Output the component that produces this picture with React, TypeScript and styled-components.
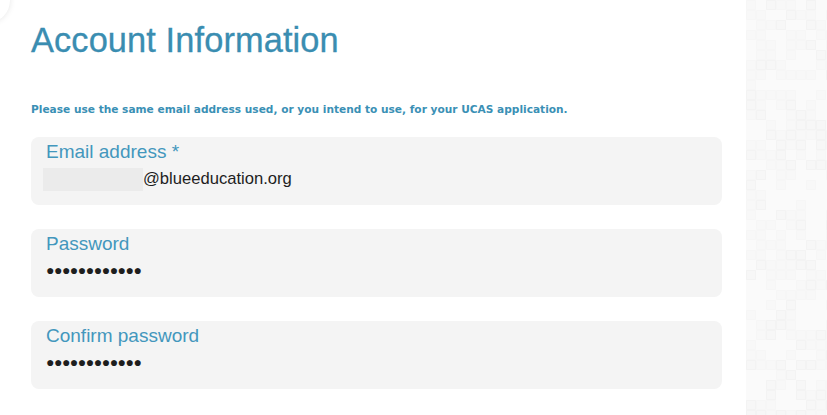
import styled, { createGlobalStyle } from "styled-components";

const GlobalStyle = createGlobalStyle`
  html, body {
    margin: 0;
    padding: 0;
    background: #ffffff;
  }
  body {
    font-family: "Liberation Sans", Arial, sans-serif;
  }
`;

const Page = styled.div`
  display: flex;
  width: 827px;
  height: 415px;
  overflow: hidden;
  position: relative;
  background: #fff;
`;

const Main = styled.main`
  flex: 0 0 746px;
  padding: 21px 24px 0 31px;
  box-sizing: border-box;
`;

const Corner = styled.div`
  position: absolute;
  left: -30px;
  top: -22px;
  width: 40px;
  height: 44px;
  border-radius: 50%;
  background: #fff;
  box-shadow: 0 0 6px rgba(0, 0, 0, 0.1);
`;

const Title = styled.h1`
  margin: 0;
  font-family: "Liberation Sans", Arial, sans-serif;
  font-weight: 400;
  font-size: 34.4px;
  line-height: 38px;
  color: #3a8db1;
  letter-spacing: 0.1px;
  -webkit-text-stroke: 0.3px #3a8db1;
`;

const Notice = styled.p`
  margin: 43px 0 0;
  font-family: "DejaVu Sans", Verdana, sans-serif;
  font-weight: 700;
  font-size: 10.6px;
  line-height: 14px;
  color: #3a90b5;
`;

const Fields = styled.div`
  display: flex;
  flex-direction: column;
  gap: 24px;
  margin-top: 21px;
`;

const Field = styled.div`
  height: 68px;
  box-sizing: border-box;
  padding: 3px 15px 0;
  background: #f4f4f4;
  border-radius: 8px;
`;

const Label = styled.div`
  font-size: 19px;
  line-height: 23px;
  color: #4397bd;
`;

const Value = styled.div<{ $dots?: boolean }>`
  display: flex;
  align-items: center;
  margin-top: ${({ $dots }) => ($dots ? "3px" : "4px")};
  font-size: ${({ $dots }) => ($dots ? "14px" : "16.6px")};
  line-height: 24px;
  color: #1e1e1e;
  letter-spacing: ${({ $dots }) => ($dots ? "-0.5px" : "0")};
`;

const Redacted = styled.span`
  display: inline-block;
  width: 100px;
  height: 23px;
  margin-left: -3px;
  background: #ebebeb;
`;

const Aside = styled.aside`
  flex: 1;
  background: #fafafa;
`;

const squares = (() => {
  const out: { x: number; y: number; o: number }[] = [];
  let seed = 7;
  const rnd = () => {
    seed = (seed * 9301 + 49297) % 233280;
    return seed / 233280;
  };
  for (let y = 0; y < 415; y += 10) {
    for (let x = 0; x < 81; x += 10) {
      const r = rnd();
      if (r < 0.5) out.push({ x, y, o: r < 0.15 ? 0.022 : 0.012 });
    }
  }
  return out;
})();

const Pattern = () => (
  <svg width="81" height="415" viewBox="0 0 81 415" style={{ display: "block" }}>
    {squares.map((s, i) => (
      <rect
        key={i}
        x={s.x + 0.5}
        y={s.y + 0.5}
        width="9"
        height="9"
        fill="#000"
        fillOpacity={s.o / 2}
        stroke="#000"
        strokeOpacity={s.o}
      />
    ))}
  </svg>
);

const fields = [
  { label: "Email address *", email: "@blueeducation.org" },
  { label: "Password", dots: 12 },
  { label: "Confirm password", dots: 12 },
];

const App = () => {
  return (
    <>
      <GlobalStyle />
      <Page>
        <Corner />
        <Main>
          <Title>Account Information</Title>
          <Notice>
            Please use the same email address used, or you intend to use, for
            your UCAS application.
          </Notice>
          <Fields>
            {fields.map((f) => (
              <Field key={f.label}>
                <Label>{f.label}</Label>
                {f.email ? (
                  <Value>
                    <Redacted />
                    {f.email}
                  </Value>
                ) : (
                  <Value $dots>{"●".repeat(f.dots ?? 0)}</Value>
                )}
              </Field>
            ))}
          </Fields>
        </Main>
        <Aside>
          <Pattern />
        </Aside>
      </Page>
    </>
  );
};

export default App;
